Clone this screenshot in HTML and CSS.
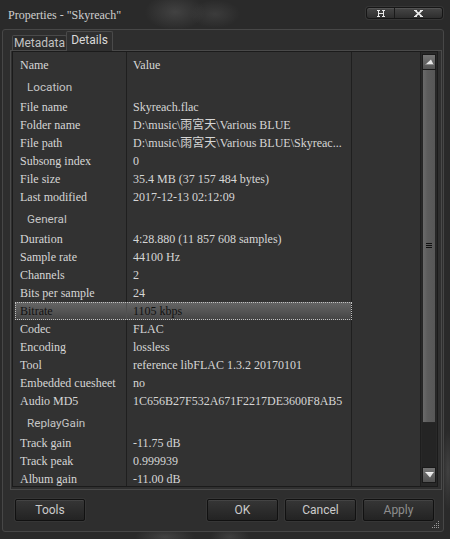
FILE: index.html
```html
<!DOCTYPE html>
<html>
<head>
<meta charset="utf-8">
<link rel="stylesheet" href="styles.css">
</head>
<body>
<div class="win">
  <div class="titlebar">
    <span class="title">Properties - "Skyreach"</span>
    <div class="tbtns">
      <span class="tb tb-max"><svg width="8" height="7" viewBox="0 0 8 7"><path d="M0 0.5h3M5 0.5h3M1.5 0.5v6M6.5 0.5v6M1.5 3.5h5M0 6.5h3M5 6.5h3" stroke="#e8e8e8" stroke-width="1" fill="none"/></svg></span>
      <span class="tb tb-close"><svg width="9" height="7" viewBox="0 0 9 7"><path d="M1.5 0.8L7.5 6.2M7.5 0.8L1.5 6.2" stroke="#ececec" stroke-width="1.7" fill="none"/><path d="M0 0.5h3M6 0.5h3M0 6.5h3M6 6.5h3" stroke="#ececec" stroke-width="1" fill="none"/></svg></span>
    </div>
  </div>
  <div class="client">
    <div class="tabs">
      <div class="tab tab-meta">Metadata</div>
      <div class="tab tab-details">Details</div>
    </div>
    <div class="panel">
      <div class="list">
        <div class="rows">
          <div class="row head"><div class="main"><div class="c1">Name</div><div class="c2">Value</div></div></div>
          <div class="row group"><div class="main"><div class="c1">Location</div><div class="c2"></div></div></div>
          <div class="row"><div class="main"><div class="c1">File name</div><div class="c2">Skyreach.flac</div></div></div>
          <div class="row"><div class="main"><div class="c1">Folder name</div><div class="c2">D:\music\雨宮天\Various BLUE</div></div></div>
          <div class="row"><div class="main"><div class="c1">File path</div><div class="c2">D:\music\雨宮天\Various BLUE\Skyreac...</div></div></div>
          <div class="row"><div class="main"><div class="c1">Subsong index</div><div class="c2">0</div></div></div>
          <div class="row"><div class="main"><div class="c1">File size</div><div class="c2">35.4 MB (37 157 484 bytes)</div></div></div>
          <div class="row"><div class="main"><div class="c1">Last modified</div><div class="c2">2017-12-13 02:12:09</div></div></div>
          <div class="row group"><div class="main"><div class="c1">General</div><div class="c2"></div></div></div>
          <div class="row"><div class="main"><div class="c1">Duration</div><div class="c2">4:28.880 (11 857 608 samples)</div></div></div>
          <div class="row"><div class="main"><div class="c1">Sample rate</div><div class="c2">44100 Hz</div></div></div>
          <div class="row"><div class="main"><div class="c1">Channels</div><div class="c2">2</div></div></div>
          <div class="row"><div class="main"><div class="c1">Bits per sample</div><div class="c2">24</div></div></div>
          <div class="row"><div class="main sel"><div class="c1">Bitrate</div><div class="c2">1105 kbps</div></div></div>
          <div class="row"><div class="main"><div class="c1">Codec</div><div class="c2">FLAC</div></div></div>
          <div class="row"><div class="main"><div class="c1">Encoding</div><div class="c2">lossless</div></div></div>
          <div class="row"><div class="main"><div class="c1">Tool</div><div class="c2">reference libFLAC 1.3.2 20170101</div></div></div>
          <div class="row"><div class="main"><div class="c1">Embedded cuesheet</div><div class="c2">no</div></div></div>
          <div class="row"><div class="main"><div class="c1">Audio MD5</div><div class="c2">1C656B27F532A671F2217DE3600F8AB5</div></div></div>
          <div class="row group"><div class="main"><div class="c1">ReplayGain</div><div class="c2"></div></div></div>
          <div class="row"><div class="main"><div class="c1">Track gain</div><div class="c2">-11.75 dB</div></div></div>
          <div class="row"><div class="main"><div class="c1">Track peak</div><div class="c2">0.999939</div></div></div>
          <div class="row"><div class="main"><div class="c1">Album gain</div><div class="c2">-11.00 dB</div></div></div>
        </div>
        <div class="scroll">
          <div class="sbtn"><svg width="9" height="6" viewBox="0 0 9 6"><path d="M0.5 5.5L6 0.5L8.5 5.5Z" fill="#e6e6e6"/><path d="M0.5 5.5H8.5" stroke="#8a8a8a" stroke-width="1"/></svg></div>
          <div class="thumb"><svg width="6" height="6" viewBox="0 0 6 6"><path d="M0 0.5h6M0 2.5h6M0 4.5h6" stroke="#111" stroke-width="1"/></svg></div>
          <div class="track"></div>
          <div class="sbtn"><svg width="9" height="6" viewBox="0 0 9 6"><path d="M0.5 0.5H8.5L5 5.5Z" fill="#e6e6e6"/><path d="M0.5 0.5H8.5" stroke="#f4f4f4" stroke-width="1"/></svg></div>
        </div>
      </div>
    </div>
    <div class="buttons">
      <div class="btn">Tools</div>
      <div class="btn push">OK</div>
      <div class="btn">Cancel</div>
      <div class="btn disabled">Apply</div>
    </div>
    <svg class="grip" width="9" height="9" viewBox="0 0 9 9"><path d="M7 1h1v1h-1zM5 3h1v1h-1zM7 3h1v1h-1zM3 5h1v1h-1zM5 5h1v1h-1zM7 5h1v1h-1zM1 7h1v1h-1zM3 7h1v1h-1zM5 7h1v1h-1zM7 7h1v1h-1z" fill="#9a9a9a"/></svg>
  </div>
</div>
</body>
</html>
```

FILE: styles.css
```css
html, body {
  margin: 0;
  padding: 0;
}
body {
  width: 450px;
  height: 539px;
  overflow: hidden;
  background:
    radial-gradient(ellipse 30px 18px at 175px 12px, rgba(110,110,110,0.35), rgba(0,0,0,0)),
    radial-gradient(ellipse 25px 14px at 215px 14px, rgba(100,100,100,0.3), rgba(0,0,0,0)),
    radial-gradient(ellipse 30px 10px at 165px 537px, rgba(110,110,110,0.35), rgba(0,0,0,0)),
    radial-gradient(ellipse 20px 10px at 230px 537px, rgba(110,110,110,0.3), rgba(0,0,0,0)),
    radial-gradient(ellipse 6px 40px at 448px 470px, rgba(110,110,110,0.35), rgba(0,0,0,0)),
    #2a2a2a;
  font-family: "Liberation Serif", "Noto Sans CJK TC", serif;
}
.win {
  display: flex;
  flex-direction: column;
  height: 539px;
}
.titlebar {
  height: 29px;
  box-sizing: border-box;
  display: flex;
  align-items: flex-start;
  padding: 7px 7px 0 8px;
}
.title {
  font-family: "Liberation Serif", "Noto Sans CJK TC", serif;
  font-size: 12px;
  line-height: 16px;
  color: #cfcfcf;
}
.tbtns {
  margin-left: auto;
  display: flex;
  height: 12px;
  box-sizing: border-box;
  border: 1px solid #161616;
  border-radius: 3px;
  background: linear-gradient(#464646, #2e2e2e);
  box-shadow: inset 0 1px 0 rgba(255,255,255,0.08), 0 0 0 1px rgba(255,255,255,0.06);
}
.tb {
  display: flex;
  align-items: center;
  justify-content: center;
}
.tb-max {
  width: 27px;
}
.tb-close {
  width: 47px;
  border-left: 1px solid #1a1a1a;
}
.client {
  margin-left: 2px;
  width: 442px;
  height: 503px;
  box-sizing: border-box;
  border: 1px solid #474747;
  border-radius: 3px;
  background: #2e2e2e;
  display: flex;
  flex-direction: column;
  position: relative;
}
.tabs {
  display: flex;
  align-items: flex-start;
  height: 21px;
  margin-left: 9px;
  margin-bottom: -1px;
  position: relative;
  z-index: 1;
  font-family: Roboto, "Liberation Sans", sans-serif;
  font-size: 12px;
}
.tab {
  box-sizing: border-box;
  border: 1px solid #4a4a4a;
  border-bottom: none;
  border-radius: 2px 2px 0 0;
  text-align: center;
}
.tab-meta {
  width: 55px;
  height: 15px;
  margin-top: 5px;
  line-height: 14px;
  background: #2b2b2b;
  color: #c2c2c2;
}
.tab-details {
  width: 47px;
  height: 20px;
  margin-top: 1px;
  margin-left: -1px;
  line-height: 17px;
  background: #2f2f2f;
  color: #dadada;
}
.panel {
  margin: 0 1px 0 7px;
  height: 440px;
  box-sizing: border-box;
  border: 1px solid #4a4a4a;
  background: #2f2f2f;
  display: flex;
}
.list {
  flex: 1;
  margin: 0 3px 2px 1px;
  border: 1px solid #1b1b1b;
  background: #323232;
  display: flex;
  overflow: hidden;
}
.rows {
  flex: 1;
  overflow: hidden;
  padding-left: 2px;
}
.row {
  display: flex;
  height: 18px;
  line-height: 18px;
  font-family: "Liberation Serif", "Noto Sans CJK TC", serif;
  font-size: 12px;
  color: #d6d6d6;
  white-space: nowrap;
}
.main {
  width: 337px;
  display: flex;
  box-sizing: border-box;
  border-right: 1px solid #1f1f1f;
}
.c1 {
  flex: 0 0 112px;
  box-sizing: border-box;
  padding-left: 5px;
  border-right: 1px solid #1f1f1f;
  overflow: hidden;
  font-family: "Liberation Serif", "Noto Sans CJK TC", serif;
}
.c2 {
  flex: 1;
  padding-left: 6px;
  overflow: hidden;
  font-family: "Liberation Serif", "Noto Sans CJK TC", serif;
}
.row.head {
  height: 22px;
}
.row.head .c1, .row.head .c2 {
  box-sizing: border-box;
  padding-top: 3px;
  line-height: 20px;
}
.row.group {
  height: 24px;
}
.row.group .c1 {
  padding-left: 12px;
  padding-top: 3px;
  line-height: 21px;
  font-family: Roboto, "Liberation Sans", sans-serif;
  font-size: 11.7px;
  color: #c4c4c4;
}
.main.sel {
  background: linear-gradient(#666666, #444444);
  outline: 1px dotted #c0c0c0;
  outline-offset: -1px;
  color: #121212;
}
.main.sel .c1 {
  border-right-color: #505050;
}
.scroll {
  width: 17px;
  box-sizing: border-box;
  padding: 2px 1px 3px 1px;
  background: #282828;
  border-left: 1px solid #1e1e1e;
  display: flex;
  flex-direction: column;
}
.sbtn {
  height: 16px;
  box-sizing: border-box;
  border: 1px solid #1a1a1a;
  background: linear-gradient(#757575, #525252);
  display: flex;
  align-items: center;
  justify-content: center;
}
.thumb {
  height: 353px;
  box-sizing: border-box;
  border: 1px solid #262626;
  border-top: none;
  background: linear-gradient(to right, #6a6a6a, #5c5c5c 40%, #575757);
  display: flex;
  align-items: center;
  justify-content: center;
}
.track {
  flex: 1;
  background: #242424;
}
.buttons {
  display: flex;
  gap: 7px;
  margin: 9px 9px 0 12px;
}
.btn {
  width: 71px;
  height: 22px;
  box-sizing: border-box;
  border: 1px solid #111;
  border-radius: 2px;
  background: linear-gradient(#363636, #232323);
  box-shadow: inset 0 1px 0 rgba(255,255,255,0.07), 0 0 0 1px rgba(255,255,255,0.04);
  display: flex;
  align-items: center;
  justify-content: center;
  font-family: Roboto, "Liberation Sans", sans-serif;
  font-size: 12px;
  color: #cbcbcb;
}
.btn:first-child {
  width: 70px;
}
.btn.push {
  margin-left: auto;
}
.btn.disabled {
  color: #8e8e8e;
}
.grip {
  position: absolute;
  right: 3px;
  bottom: 2px;
}
```
